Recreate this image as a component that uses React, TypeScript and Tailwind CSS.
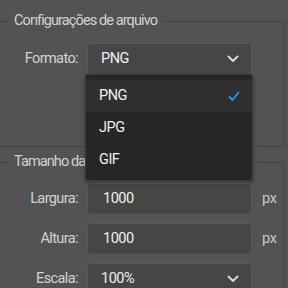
import React from 'react';

const font = { fontFamily: '"Liberation Sans Narrow", Roboto, "Liberation Sans", sans-serif' };

const Chevron = () => (
  <svg width="12" height="8" viewBox="0 0 12 8" className="shrink-0">
    <path d="M1.5 1.5 L6 6 L10.5 1.5" fill="none" stroke="#d6d6d6" strokeWidth="2" strokeLinecap="round" strokeLinejoin="round" />
  </svg>
);

const Check = () => (
  <svg width="12" height="11" viewBox="0 0 12 11">
    <path d="M1.5 6 L4.5 9 L10.5 1.5" fill="none" stroke="#378ef0" strokeWidth="1.8" strokeLinecap="round" strokeLinejoin="round" />
  </svg>
);

const Row = ({ label, children, unit }: { label: string; children: React.ReactNode; unit?: string }) => (
  <div className="flex items-center h-[32px]">
    <div className="w-[78px] text-right text-[14.5px] tracking-[-0.6px] text-[#d4d4d4]">{label}</div>
    <div className="ml-[9px] w-[165px] h-[32px]">{children}</div>
    {unit && <div className="ml-[10px] text-[14.5px] tracking-[-0.4px] text-[#c8c8c8]">{unit}</div>}
  </div>
);

const Select = ({ value }: { value: string }) => (
  <div className="h-full flex items-center justify-between pl-[13px] pr-[12px] rounded-[4px] bg-[#464646] border border-[#5a5a5a] text-[14.5px] tracking-[-0.5px] text-[#f0f0f0]">
    <span>{value}</span>
    <Chevron />
  </div>
);

const Input = ({ value }: { value: string }) => (
  <div className="h-full flex items-center pl-[15px] rounded-[4px] bg-[#464646] border border-[#5a5a5a] text-[14.5px] tracking-[-0.5px] text-[#f0f0f0]">
    {value}
  </div>
);

export default function App() {
  const options = ['PNG', 'JPG', 'GIF'];
  return (
    <div className="relative w-[288px] h-[288px] overflow-hidden bg-[#535353] pt-[11px]" style={font}>
      {/* Configurações de arquivo */}
      <fieldset className="w-[284px] border border-l-0 border-[#444444]">
        <legend className="ml-[8px] px-[6px] h-[20px] leading-[20px] text-[14.5px] tracking-[-0.9px] text-[#d2d2d2]">
          Configurações de arquivo
        </legend>
        <div className="pt-[12px] pb-[71px]">
          <Row label="Formato:">
            <Select value="PNG" />
          </Row>
        </div>
      </fieldset>

      {/* Tamanho da imagem */}
      <fieldset className="mt-[5px] w-[284px] border border-l-0 border-[#444444]">
        <legend className="ml-[8px] px-[6px] h-[20px] leading-[20px] text-[14.5px] tracking-[-0.9px] text-[#d2d2d2]">
          Tamanho da imagem
        </legend>
        <div className="pt-[11px] pb-[20px] flex flex-col gap-[8px]">
          <Row label="Largura:" unit="px">
            <Input value="1000" />
          </Row>
          <Row label="Altura:" unit="px">
            <Input value="1000" />
          </Row>
          <Row label="Escala:">
            <Select value="100%" />
          </Row>
        </div>
      </fieldset>

      {/* Open dropdown menu */}
      <div className="absolute left-[85px] top-[74px] w-[168px] pt-[5px] pb-[4px] bg-[#262626] border border-[#3c3c3c] rounded-b-[3px] shadow-[0_2px_4px_rgba(0,0,0,0.35)]">
        {options.map((o, i) => (
          <div
            key={o}
            className={`h-[32px] flex items-center justify-between pl-[13px] pr-[12px] text-[14.5px] tracking-[-0.5px] text-[#f0f0f0] ${i === 0 ? 'bg-[#303030]' : ''}`}
          >
            <span>{o}</span>
            {i === 0 && <Check />}
          </div>
        ))}
      </div>
    </div>
  );
}
